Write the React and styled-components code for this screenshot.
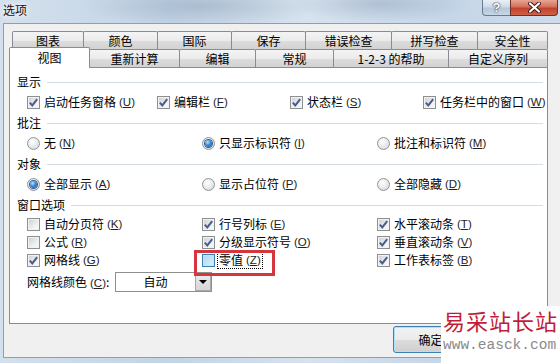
import React from 'react';
import styled, { createGlobalStyle } from 'styled-components';

const Global = createGlobalStyle`
  html, body { margin: 0; padding: 0; }
  body {
    width: 560px; height: 363px; overflow: hidden;
    font-family: "Noto Sans CJK SC", "Liberation Sans", sans-serif;
    font-size: 12px; color: #000;
  }
`;

const Window = styled.div`
  position: relative;
  width: 560px; height: 363px; overflow: hidden;
  display: flex; flex-direction: column;
  background:
    radial-gradient(ellipse 120px 20px at 200px 6px, rgba(120,140,165,0.35), transparent),
    radial-gradient(ellipse 90px 18px at 380px 4px, rgba(110,130,160,0.3), transparent),
    linear-gradient(90deg, #d3e0ed 0%, #c3d4e6 30%, #d6e2ee 55%, #c5d6e8 80%, #cedcea 100%);
`;

const TitleBar = styled.div`
  height: 23px; flex-shrink: 0;
  display: flex; align-items: flex-start; justify-content: space-between;
`;

const Title = styled.div`
  padding: 2px 0 0 3px;
  font-size: 12px; line-height: 16px; color: #111;
  text-shadow: 0 0 5px #fff, 0 0 8px #fff;
`;

const Controls = styled.div`
  display: flex; margin-right: 2px;
`;

const CaptionButton = styled.div`
  box-sizing: border-box;
  width: ${p => p.$w}px; height: 16px;
  display: flex; align-items: center; justify-content: center;
  border: 1px solid ${p => p.$close ? '#6b3129' : '#6a7b91'};
  border-top: none;
  border-radius: ${p => p.$close ? '0 0 4px 0' : '0 0 0 4px'};
  background: ${p => p.$close
    ? 'linear-gradient(180deg, #e8a593 0%, #d4705c 45%, #c2422c 55%, #d0614a 100%)'
    : 'linear-gradient(180deg, #e9eff6 0%, #cfdbe8 45%, #b5c7da 55%, #c8d6e4 100%)'};
  color: #fff; font-weight: bold; font-size: 13px;
  font-family: "Liberation Sans", sans-serif;
  text-shadow: 0 0 2px #334, 0 0 1px #223;
  margin-left: ${p => p.$close ? '-1px' : '0'};
`;

const Client = styled.div`
  flex: 1;
  margin: 0 0 5px 3px;
  border-left: 1px solid #8aa0b8;
  border-top: 1px solid #8aa0b8;
  border-bottom: 1px solid #8aa0b8;
  background: #f0f0f0;
  padding: 7px 0 0 5px;
  display: flex; flex-direction: column;
`;

const TabStrip = styled.div`
  position: relative; z-index: 1;
  width: 539px;
  display: flex; flex-direction: column;
`;

const TabRow = styled.div`
  display: flex; align-items: flex-end;
  height: 18px;
  padding-left: ${p => p.$indent}px;
`;

const Tab = styled.div`
  box-sizing: border-box;
  position: relative;
  z-index: ${p => p.$active ? 2 : 0};
  flex-shrink: 0;
  width: ${p => p.$w}px;
  height: ${p => p.$active ? 21 : 18}px;
  margin-right: -1px;
  margin-bottom: ${p => p.$active ? -1 : 0}px;
  border: 1px solid #898c95;
  border-bottom: none;
  border-radius: 2px 2px 0 0;
  background: ${p => p.$active
    ? '#fff'
    : 'linear-gradient(180deg, #f4f4f4 0%, #ebebeb 50%, #dddddd 51%, #d2d2d2 100%)'};
  text-align: center;
  line-height: ${p => p.$active ? 19 : 17}px;
  font-size: 12px;
  white-space: nowrap;
`;

const Panel = styled.div`
  box-sizing: border-box;
  width: 539px; height: 257px;
  border: 1px solid #898c95;
  background: #fff;
  padding: 4px 4px 0 7px;
`;

const Section = styled.div`
  margin-bottom: ${p => p.$gap ?? 1}px;
`;

const Header = styled.div`
  display: flex; align-items: center;
  height: 20px;
  line-height: 16px;
`;

const HeaderLine = styled.div`
  flex: 1; height: 1px;
  margin-left: 6px;
  background: #d5dbe2;
`;

const Row = styled.div`
  display: grid;
  grid-template-columns: ${p => p.$cols};
  align-items: center;
  height: ${p => p.$h}px;
  padding-left: 10px;
`;

const Item = styled.div`
  position: relative;
  display: flex; align-items: center;
  gap: 4px;
  white-space: nowrap;
  line-height: 16px;
`;

const Box = styled.span`
  box-sizing: border-box;
  width: 13px; height: 13px; flex-shrink: 0;
  display: flex; align-items: center; justify-content: center;
  border: 1px solid ${p => p.$hover ? '#3c7fb1' : '#8e8f8f'};
  background: ${p => p.$hover
    ? 'linear-gradient(135deg, #a9d6f5 0%, #def2fd 100%)'
    : 'linear-gradient(135deg, #c9ccd1 0%, #eeeff0 60%, #fbfbfb 100%)'};
  box-shadow: inset 0 0 0 1px ${p => p.$hover ? '#c4e5fa' : '#f2f2f2'};
`;

const RadioCircle = styled.span`
  box-sizing: border-box;
  width: 13px; height: 13px; flex-shrink: 0;
  border-radius: 50%;
  display: flex; align-items: center; justify-content: center;
  border: 1px solid #929497;
  background: radial-gradient(circle at 40% 35%, #ffffff 0%, #e6e7e9 55%, #cfd1d4 100%);
`;

const RadioDot = styled.span`
  width: 7px; height: 7px; border-radius: 50%;
  background: radial-gradient(circle at 38% 32%, #b9e3fb 0%, #3f8ad3 45%, #1c4f95 100%);
  box-shadow: 0 0 0 1px #2b5e9a;
`;

const LabelText = styled.span`
  display: inline-flex; align-items: center;
  padding: 0 1px;
  border: 1px ${p => p.$focus ? 'dotted #000' : 'solid transparent'};
  margin-left: -2px;
`;

const Key = styled.span`
  margin-left: 3px;
  font-family: "Liberation Sans", "Noto Sans CJK SC", sans-serif;
  font-size: 11.5px;
  color: #222;
  u { text-decoration: underline; }
`;

const Annotation = styled.div`
  position: absolute;
  left: -8px; top: -1px;
  width: 81px; height: 26px;
  box-sizing: border-box;
  border: 3px solid #d5363d;
  pointer-events: none;
`;

const Label = styled.span`
  width: 88px;
  white-space: nowrap;
  line-height: 16px;
`;

const ComboRow = styled.div`
  display: flex; align-items: center;
  height: 20px;
  padding-left: 10px;
  margin-top: 3px;
`;

const Combo = styled.div`
  box-sizing: border-box;
  width: 97px; height: 20px;
  border: 1px solid #8e8f8f;
  display: flex;
  background: #fff;
`;

const ComboValue = styled.div`
  flex: 1;
  text-align: center;
  line-height: 18px;
`;

const ComboArrow = styled.div`
  box-sizing: border-box;
  width: 16px; height: 18px;
  border: 1px solid #a9a9a9;
  background: linear-gradient(180deg, #ececec 0%, #d6d6d6 100%);
  display: flex; align-items: center; justify-content: center;
  &::after {
    content: "";
    border-left: 4px solid transparent;
    border-right: 4px solid transparent;
    border-top: 4px solid #000;
  }
`;

const Footer = styled.div`
  box-sizing: border-box;
  width: 539px;
  display: flex; justify-content: flex-end;
  padding: 2px 80px 0 0;
`;

const Button = styled.div`
  box-sizing: border-box;
  width: 75px; height: 27px;
  border: 1px solid ${p => p.$default ? '#3c7fb1' : '#707070'};
  border-radius: 3px;
  background: linear-gradient(180deg, #f2f2f2 0%, #ebebeb 50%, #dddddd 51%, #cfcfcf 100%);
  box-shadow: inset 0 0 0 1px ${p => p.$default ? '#b3e0f9' : '#fcfcfc'};
  text-align: center;
  line-height: 25px;
`;

const Watermark = styled.div`
  position: absolute;
  left: 441px; top: 306px;
  width: 119px; height: 57px;
  background: #fff;
  display: flex; flex-direction: column;
  padding: 1px 0 0 2px;
  box-sizing: border-box;
`;

const WmTitle = styled.div`
  color: #c21d36;
  font-size: 22px;
  line-height: 26px;
  letter-spacing: 1px;
  white-space: nowrap;
`;

const WmUrl = styled.div`
  color: #8a8a8a;
  font-family: "Liberation Mono", monospace;
  font-size: 14.5px;
  line-height: 18px;
  margin-top: 3px;
  white-space: nowrap;
`;

const Check = () => (
  <svg width="9" height="9" viewBox="0 0 9 9">
    <path d="M0.8 4.6 L3.3 7.4 L8.2 1.2" stroke="#4a5d8a" strokeWidth="2" fill="none" strokeLinejoin="miter" />
  </svg>
);

const Checkbox = ({ checked, hover, focus, label, k, children }) => (
  <Item>
    <Box $hover={hover}>{checked && <Check />}</Box>
    <LabelText $focus={focus}>
      {label}
      <Key>(<u>{k}</u>)</Key>
    </LabelText>
    {children}
  </Item>
);

const Radio = ({ checked, label, k }) => (
  <Item>
    <RadioCircle>{checked && <RadioDot />}</RadioCircle>
    <LabelText>
      {label}
      <Key>(<u>{k}</u>)</Key>
    </LabelText>
  </Item>
);

const backTabs = [
  ['图表', 72], ['颜色', 75], ['国际', 75], ['保存', 75],
  ['错误检查', 87], ['拼写检查', 87], ['安全性', 71],
];
const frontTabs = [
  ['视图', 81, true], ['重新计算', 91], ['编辑', 77], ['常规', 79],
  ['1-2-3 的帮助', 116], ['自定义序列', 100],
];

const CloseIcon = () => (
  <svg width="13" height="11" viewBox="0 0 13 11">
    <path d="M2 1.5 L11 9.5 M11 1.5 L2 9.5" stroke="#3a1a16" strokeWidth="4" strokeLinecap="round" />
    <path d="M2 1.5 L11 9.5 M11 1.5 L2 9.5" stroke="#ffffff" strokeWidth="2.2" strokeLinecap="round" />
  </svg>
);

export default function App() {
  return (
    <>
      <Global />
      <Window>
        <TitleBar>
          <Title>选项</Title>
          <Controls>
            <CaptionButton $w={29}>?</CaptionButton>
            <CaptionButton $w={48} $close><CloseIcon /></CaptionButton>
          </Controls>
        </TitleBar>
        <Client>
          <TabStrip>
            <TabRow $indent={3}>
              {backTabs.map(([t, w]) => <Tab key={t} $w={w}>{t}</Tab>)}
            </TabRow>
            <TabRow $indent={0}>
              {frontTabs.map(([t, w, a]) => <Tab key={t} $w={w} $active={a}>{t}</Tab>)}
            </TabRow>
          </TabStrip>
          <Panel>
            <Section>
              <Header>显示<HeaderLine /></Header>
              <Row $cols="130px 133px 133px 1fr" $h={20}>
                <Checkbox checked label="启动任务窗格" k="U" />
                <Checkbox checked label="编辑栏" k="F" />
                <Checkbox checked label="状态栏" k="S" />
                <Checkbox checked label="任务栏中的窗口" k="W" />
              </Row>
            </Section>
            <Section>
              <Header>批注<HeaderLine /></Header>
              <Row $cols="175px 175px 1fr" $h={20}>
                <Radio label="无" k="N" />
                <Radio checked label="只显示标识符" k="I" />
                <Radio label="批注和标识符" k="M" />
              </Row>
            </Section>
            <Section>
              <Header>对象<HeaderLine /></Header>
              <Row $cols="175px 175px 1fr" $h={20}>
                <Radio checked label="全部显示" k="A" />
                <Radio label="显示占位符" k="P" />
                <Radio label="全部隐藏" k="D" />
              </Row>
            </Section>
            <Section $gap={0}>
              <Header>窗口选项<HeaderLine /></Header>
              <Row $cols="175px 175px 1fr" $h={18}>
                <Checkbox label="自动分页符" k="K" />
                <Checkbox checked label="行号列标" k="E" />
                <Checkbox checked label="水平滚动条" k="T" />
              </Row>
              <Row $cols="175px 175px 1fr" $h={18}>
                <Checkbox label="公式" k="R" />
                <Checkbox checked label="分级显示符号" k="O" />
                <Checkbox checked label="垂直滚动条" k="V" />
              </Row>
              <Row $cols="175px 175px 1fr" $h={18}>
                <Checkbox checked label="网格线" k="G" />
                <Checkbox hover focus label="零值" k="Z">
                  <Annotation />
                </Checkbox>
                <Checkbox checked label="工作表标签" k="B" />
              </Row>
              <ComboRow>
                <Label>网格线颜色<Key>(<u>C</u>)</Key>:</Label>
                <Combo>
                  <ComboValue>自动</ComboValue>
                  <ComboArrow />
                </Combo>
              </ComboRow>
            </Section>
          </Panel>
          <Footer>
            <Button $default>确定</Button>
          </Footer>
        </Client>
        <Watermark>
          <WmTitle>易采站长站</WmTitle>
          <WmUrl>www.easck.com</WmUrl>
        </Watermark>
      </Window>
    </>
  );
}
